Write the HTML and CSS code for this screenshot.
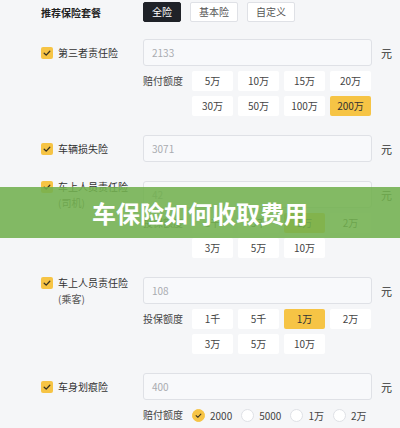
FILE: index.html
```html
<!DOCTYPE html>
<html lang="zh-CN">
<head>
<meta charset="utf-8">
<title>车保险如何收取费用</title>
<link rel="stylesheet" href="styles.css">
</head>
<body>
<div class="page">
  <div class="plan-bar">
    <span class="plan-title">推荐保险套餐</span>
    <div class="plan-tabs">
      <span class="tab active">全险</span>
      <span class="tab">基本险</span>
      <span class="tab">自定义</span>
    </div>
  </div>

  <div class="item">
    <div class="item-main">
      <div class="item-label"><div class="label-inner">
        <span class="check"><svg viewBox="0 0 12 12"><path d="M3.2 6.2 L5.2 8.1 L8.8 4.3"/></svg></span>
        <span class="name">第三者责任险</span>
      </div></div>
      <div class="field">2133</div>
      <span class="unit">元</span>
    </div>
    <div class="options">
      <span class="opt-label">赔付额度</span>
      <div class="opt-grid">
        <span class="opt">5万</span><span class="opt">10万</span><span class="opt">15万</span><span class="opt">20万</span>
        <span class="opt">30万</span><span class="opt">50万</span><span class="opt">100万</span><span class="opt selected">200万</span>
      </div>
    </div>
  </div>

  <div class="item">
    <div class="item-main">
      <div class="item-label"><div class="label-inner">
        <span class="check"><svg viewBox="0 0 12 12"><path d="M3.2 6.2 L5.2 8.1 L8.8 4.3"/></svg></span>
        <span class="name">车辆损失险</span>
      </div></div>
      <div class="field">3071</div>
      <span class="unit">元</span>
    </div>
  </div>

  <div class="item">
    <div class="item-main">
      <div class="item-label"><div class="label-inner">
        <span class="check"><svg viewBox="0 0 12 12"><path d="M3.2 6.2 L5.2 8.1 L8.8 4.3"/></svg></span>
        <span class="name">车上人员责任险<span class="sub">(司机)</span></span>
      </div></div>
      <div class="field">42</div>
      <span class="unit">元</span>
    </div>
    <div class="options">
      <span class="opt-label">投保额度</span>
      <div class="opt-grid">
        <span class="opt">1千</span><span class="opt">5千</span><span class="opt selected">1万</span><span class="opt">2万</span>
        <span class="opt">3万</span><span class="opt">5万</span><span class="opt">10万</span>
      </div>
    </div>
  </div>

  <div class="item">
    <div class="item-main">
      <div class="item-label"><div class="label-inner">
        <span class="check"><svg viewBox="0 0 12 12"><path d="M3.2 6.2 L5.2 8.1 L8.8 4.3"/></svg></span>
        <span class="name">车上人员责任险<span class="sub">(乘客)</span></span>
      </div></div>
      <div class="field">108</div>
      <span class="unit">元</span>
    </div>
    <div class="options">
      <span class="opt-label">投保额度</span>
      <div class="opt-grid">
        <span class="opt">1千</span><span class="opt">5千</span><span class="opt selected">1万</span><span class="opt">2万</span>
        <span class="opt">3万</span><span class="opt">5万</span><span class="opt">10万</span>
      </div>
    </div>
  </div>

  <div class="item">
    <div class="item-main">
      <div class="item-label"><div class="label-inner">
        <span class="check"><svg viewBox="0 0 12 12"><path d="M3.2 6.2 L5.2 8.1 L8.8 4.3"/></svg></span>
        <span class="name">车身划痕险</span>
      </div></div>
      <div class="field">400</div>
      <span class="unit">元</span>
    </div>
    <div class="options">
      <span class="opt-label">赔付额度</span>
      <div class="radio-group">
        <span class="radio"><span class="dot on"><svg viewBox="0 0 13 13"><path d="M3.7 6.7 L5.7 8.6 L9.3 4.8"/></svg></span>2000</span>
        <span class="radio"><span class="dot"></span>5000</span>
        <span class="radio"><span class="dot"></span>1万</span>
        <span class="radio"><span class="dot"></span>2万</span>
      </div>
    </div>
  </div>

  <div class="banner">车保险如何收取费用</div>
</div>
</body>
</html>
```

FILE: styles.css
```css
* { box-sizing: border-box; }
html, body {
  margin: 0;
  padding: 0;
  background: #f5f6f8;
}
body {
  font-family: "Noto Sans CJK SC", "Noto Sans", sans-serif;
  font-size: 10px;
  color: #333;
  width: 400px;
  height: 428px;
  overflow: hidden;
  position: relative;
}
.page {
  padding: 2px 0 0 41px;
}
.plan-bar {
  display: flex;
  align-items: center;
  height: 20px;
}
.plan-title {
  width: 102px;
  font-weight: bold;
  font-size: 10px;
  color: #222;
}
.plan-tabs {
  display: flex;
  gap: 9px;
}
.tab {
  height: 20px;
  line-height: 18px;
  padding: 0 8px;
  border: 1px solid #dfe1e6;
  background: #fff;
  color: #555;
  border-radius: 2px;
}
.tab.active {
  background: #1f2228;
  border-color: #1f2228;
  color: #fff;
}
.item {
  margin-top: 19px;
}
.plan-bar + .item {
  margin-top: 17px;
}
.item-main {
  display: grid;
  grid-template-columns: 102px 229px auto;
  align-items: center;
}
.item-label {
  height: 27px;
  display: flex;
  align-items: center;
}
.label-inner {
  display: flex;
  align-items: flex-start;
  gap: 5px;
}
.check {
  width: 12px;
  height: 12px;
  flex: none;
  margin-top: 2px;
  background: #f6c445;
  border-radius: 2px;
  display: block;
}
.check svg, .dot svg {
  display: block;
  width: 100%;
  height: 100%;
}
.check path, .dot path {
  fill: none;
  stroke: #3a3320;
  stroke-width: 1.3;
  stroke-linecap: round;
  stroke-linejoin: round;
}
.name {
  line-height: 16px;
  color: #333;
}
.sub {
  display: block;
  color: #555;
}
.field {
  height: 27px;
  line-height: 25px;
  padding-left: 8px;
  border: 1px solid #dfe1e6;
  border-radius: 3px;
  background: #f8f9fb;
  color: #a9abb0;
}
.unit {
  margin-left: 9px;
  font-size: 11px;
  color: #333;
}
.options {
  display: flex;
  align-items: flex-start;
  margin: 5px 0 0 102px;
}
.opt-label {
  width: 49px;
  flex: none;
  line-height: 20px;
  color: #444;
}
.opt-grid {
  display: grid;
  grid-template-columns: repeat(4, 41px);
  column-gap: 5px;
  row-gap: 5px;
}
.opt {
  height: 20px;
  line-height: 20px;
  text-align: center;
  background: #fff;
  color: #444;
  border-radius: 2px;
}
.opt.selected {
  background: #f6c445;
  color: #333;
}
.radio-group {
  display: flex;
  gap: 9px;
  height: 20px;
  align-items: center;
}
.radio {
  display: flex;
  align-items: center;
  gap: 5px;
  color: #444;
}
.dot {
  width: 13px;
  height: 13px;
  border-radius: 50%;
  border: 1px solid #dfe1e6;
  background: #fff;
  display: block;
}
.dot.on {
  background: #f6c445;
  border-color: #f6c445;
}
.banner {
  position: absolute;
  left: 0;
  right: 0;
  top: 187px;
  height: 51px;
  line-height: 51px;
  text-align: center;
  background: rgba(114, 176, 78, 0.88);
  color: #fff;
  font-size: 24px;
  font-weight: bold;
}
```
